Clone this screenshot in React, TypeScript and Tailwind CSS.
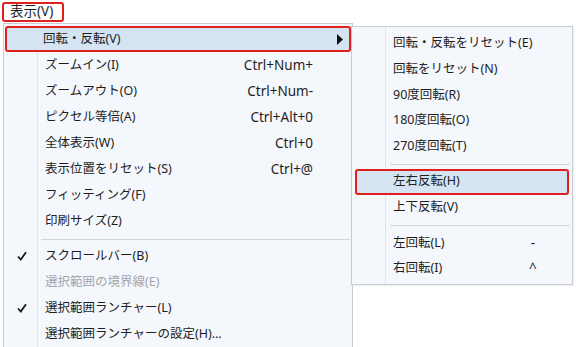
import React from 'react'

type Item =
  | { sep: true }
  | { sep?: false; label: string; shortcut?: string; checked?: boolean; disabled?: boolean; active?: boolean; sub?: boolean }

const MAIN: Item[] = [
  { label: '回転・反転(V)', sub: true, active: true },
  { label: 'ズームイン(I)', shortcut: 'Ctrl+Num+' },
  { label: 'ズームアウト(O)', shortcut: 'Ctrl+Num-' },
  { label: 'ピクセル等倍(A)', shortcut: 'Ctrl+Alt+0' },
  { label: '全体表示(W)', shortcut: 'Ctrl+0' },
  { label: '表示位置をリセット(S)', shortcut: 'Ctrl+@' },
  { label: 'フィッティング(F)' },
  { label: '印刷サイズ(Z)' },
  { sep: true },
  { label: 'スクロールバー(B)', checked: true },
  { label: '選択範囲の境界線(E)', disabled: true },
  { label: '選択範囲ランチャー(L)', checked: true },
  { label: '選択範囲ランチャーの設定(H)...' },
]

const SUB: Item[] = [
  { label: '回転・反転をリセット(E)' },
  { label: '回転をリセット(N)' },
  { label: '90度回転(R)' },
  { label: '180度回転(O)' },
  { label: '270度回転(T)' },
  { sep: true },
  { label: '左右反転(H)', active: true },
  { label: '上下反転(V)' },
  { sep: true },
  { label: '左回転(L)', shortcut: '-' },
  { label: '右回転(I)', shortcut: '^' },
]

const FONT = { fontFamily: '"Noto Sans", "Noto Sans CJK JP", sans-serif' }

function Check() {
  return (
    <svg width="10" height="10" viewBox="0 0 10 10">
      <path d="M1 5.5 L3.8 8.5 L9 1.2" fill="none" stroke="#1a1a1a" strokeWidth="1.8" />
    </svg>
  )
}

function Arrow() {
  return (
    <svg width="6" height="11" viewBox="0 0 6 11">
      <polygon points="0,0 6,5.5 0,11" fill="#111" />
    </svg>
  )
}

export default function App() {
  return (
    <div className="h-[347px] w-[576px] overflow-hidden bg-white text-[12.5px] text-[#1e1e1e]" style={FONT}>
      {/* Menu bar */}
      <div className="flex h-[23px] items-start pt-[2px] pl-[2px]">
        <div className="flex h-[20px] w-[62px] items-center rounded-[3px] border-2 border-[#e0201c] pl-[6px] text-[13.5px] leading-none">
          表示(V)
        </div>
      </div>

      {/* Main dropdown */}
      <div className="relative ml-[3px] w-[350px]">
        <div className="h-[330px] border border-b-0 border-[#c9cdd3] bg-[#f4f7fc] pt-[2px]">
          <div className="relative">
            <div className="absolute top-0 bottom-0 left-[33px] w-px bg-[#e0e4ea]" />
            {MAIN.map((it, i) =>
              it.sep ? (
                <div key={i} className="h-[9px] pt-[5px] pl-[37px] pr-[2px]">
                  <div className="h-px bg-[#d3d7dc]" />
                </div>
              ) : (
                <div
                  key={i}
                  className={
                    'relative mx-[1px] flex h-[26px] items-center ' +
                    (it.active ? 'rounded-[3px] border-2 border-[#e0201c] bg-[#d5e4f2]' : '')
                  }
                >
                  <div className={'flex w-[33px] justify-center ' + (it.active ? 'ml-[-2px]' : '')}>
                    {it.checked && <Check />}
                  </div>
                  <div
                    className={
                      'flex-1 ' + (it.active ? 'pl-[5px] ' : 'pl-[7px] ') + (it.disabled ? 'text-[#a3a6ab]' : '')
                    }
                  >
                    {it.label}
                  </div>
                  {it.shortcut && <div className="w-[120px] pr-[38px] text-right text-[13.5px]">{it.shortcut}</div>}
                  {it.sub && (
                    <div className="pr-[6px]">
                      <Arrow />
                    </div>
                  )}
                </div>
              )
            )}
          </div>
        </div>

        {/* Submenu */}
        <div className="absolute top-[3px] left-[348px] w-[222px] border border-[#c9cdd3] bg-[#f4f7fc] pt-[4px] pb-[3px] shadow-[1px_1px_2px_rgba(0,0,0,0.08)]">
          <div className="absolute top-0 bottom-0 left-[33px] w-px bg-[#e0e4ea]" />
          {SUB.map((it, i) =>
            it.sep ? (
              <div key={i} className="h-[10px] pt-[5px] pl-[38px] pr-[2px]">
                <div className="h-px bg-[#d3d7dc]" />
              </div>
            ) : (
              <div
                key={i}
                className={
                  'relative mx-[3px] flex h-[25.6px] items-center ' +
                  (it.active ? 'rounded-[3px] border-2 border-[#e0201c] bg-[#d5e4f2]' : '')
                }
              >
                <div className={'w-[38px] ' + (it.active ? 'ml-[-2px]' : '')} />
                <div className="flex-1">{it.label}</div>
                {it.shortcut && <div className="w-[40px] pr-[34px] text-right text-[13.5px]">{it.shortcut}</div>}
              </div>
            )
          )}
        </div>
      </div>
    </div>
  )
}
